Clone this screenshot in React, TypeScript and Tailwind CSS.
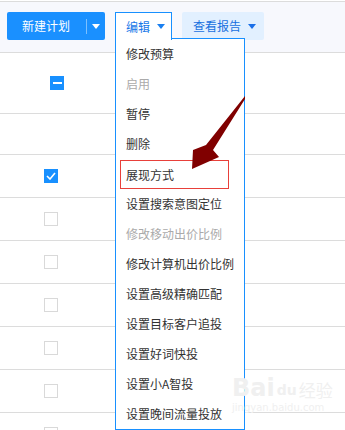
import React from "react";

const Caret = ({ color }: { color: string }) => (
  <svg width="8" height="5" viewBox="0 0 8 5" className="block">
    <polygon points="0,0 8,0 4,5" fill={color} />
  </svg>
);

const Check = ({ state }: { state: "none" | "checked" | "ind" }) => {
  if (state === "none")
    return <div className="w-[14px] h-[14px] border border-[#d9d9d9] bg-white" />;
  return (
    <div className="w-[14px] h-[14px] bg-[#1890ff] flex items-center justify-center">
      {state === "ind" ? (
        <div className="w-[9px] h-[2px] bg-white" />
      ) : (
        <svg width="10" height="8" viewBox="0 0 10 8">
          <polyline points="1,4 4,7 9,1" fill="none" stroke="white" strokeWidth="1.6" />
        </svg>
      )}
    </div>
  );
};

const items: { t: string; dis?: boolean; hl?: boolean }[] = [
  { t: "修改预算" },
  { t: "启用", dis: true },
  { t: "暂停" },
  { t: "删除" },
  { t: "展现方式", hl: true },
  { t: "设置搜索意图定位" },
  { t: "修改移动出价比例", dis: true },
  { t: "修改计算机出价比例" },
  { t: "设置高级精确匹配" },
  { t: "设置目标客户追投" },
  { t: "设置好词快投" },
  { t: "设置小A智投" },
  { t: "设置晚间流量投放" },
];

export default function App() {
  const rows: { h: string; c: "none" | "checked" | "ind" | null; pl: string }[] = [
    { h: "h-[61px]", c: "ind", pl: "pl-[50px]" },
    { h: "h-[41px]", c: null, pl: "pl-[44px]" },
    { h: "h-[43px]", c: "checked", pl: "pl-[44px]" },
    { h: "h-[43px]", c: "none", pl: "pl-[44px]" },
    { h: "h-[43px]", c: "none", pl: "pl-[44px]" },
    { h: "h-[43px]", c: "none", pl: "pl-[44px]" },
    { h: "h-[43px]", c: "none", pl: "pl-[44px]" },
    { h: "h-[43px]", c: "none", pl: "pl-[44px]" },
    { h: "h-[43px]", c: "none", pl: "pl-[44px]" },
  ];
  return (
    <div className="relative w-[345px] h-[430px] overflow-hidden bg-white font-['Noto_Sans_CJK_SC','Noto_Sans',sans-serif] text-[12px]">
      <div className="mt-px h-[52px] border-t border-b border-[#dcdcdc] bg-[#f7f8fd] flex items-start pl-[7px] pt-[10px]">
        <div className="h-[28px] w-[98px] bg-[#1a90ff] rounded-[2px] flex items-center text-white">
          <span className="pl-[15px] w-[79px]">新建计划</span>
          <div className="w-px h-[15px] bg-[#7cc0ff]" />
          <div className="pl-[5px]">
            <Caret color="#ffffff" />
          </div>
        </div>
        <div className="relative z-20 ml-[10px] h-[28px] w-[57px] bg-white border-t border-l border-r border-[#1890ff] flex items-center text-[#1878e8] pl-[10px]">
          <span>编辑</span>
          <div className="pl-[7px]">
            <Caret color="#1a7ff0" />
          </div>
        </div>
        <div className="ml-[10px] h-[28px] w-[82px] bg-[#e2f0ff] rounded-[2px] flex items-center text-[#1870e0] pl-[11px]">
          <span>查看报告</span>
          <div className="pl-[7px]">
            <Caret color="#1a6fe8" />
          </div>
        </div>
      </div>
      {rows.map((r, i) => (
        <div key={i} className={`${r.h} border-b border-[#dcdcdc] flex items-center ${r.pl}`}>
          {r.c && <Check state={r.c} />}
        </div>
      ))}

      <div className="absolute left-[115px] top-[38px] w-[130px] h-[392px] z-10 bg-white border border-[#1890ff]">
        {items.map((it, i) =>
          it.hl ? (
            <div key={i} className="h-[30px] pt-px">
              <div className="ml-[4px] w-[109px] h-[29px] border border-[#e8403a] pl-[5px] flex items-center text-[#333]">
                {it.t}
              </div>
            </div>
          ) : (
            <div
              key={i}
              className={`h-[30px] flex items-center pl-[10px] ${it.dis ? "text-[#aaa]" : "text-[#333]"}`}
            >
              {it.t}
            </div>
          )
        )}
      </div>

      <svg className="absolute left-0 top-0 z-30" width="345" height="430" viewBox="0 0 345 430">
        <polygon points="245,96 245,99 213,150 219,157 192,169 193,150 206,145" fill="#800000" />
      </svg>

      <div className="absolute left-[232px] top-[376px] z-30 text-[#f0f0f0] leading-none select-none">
        <div className="flex items-end gap-[2px]">
          <span className="text-[24px] font-bold font-['DejaVu_Sans',sans-serif]">Bai</span>
          <span className="text-[14px] font-bold font-['DejaVu_Sans',sans-serif] pb-[3px]">du</span>
          <span className="text-[17px] pb-[2px]">经验</span>
        </div>
        <div className="text-[10px] mt-[3px] font-['DejaVu_Sans',sans-serif]">jingyan.baidu.com</div>
      </div>
    </div>
  );
}
